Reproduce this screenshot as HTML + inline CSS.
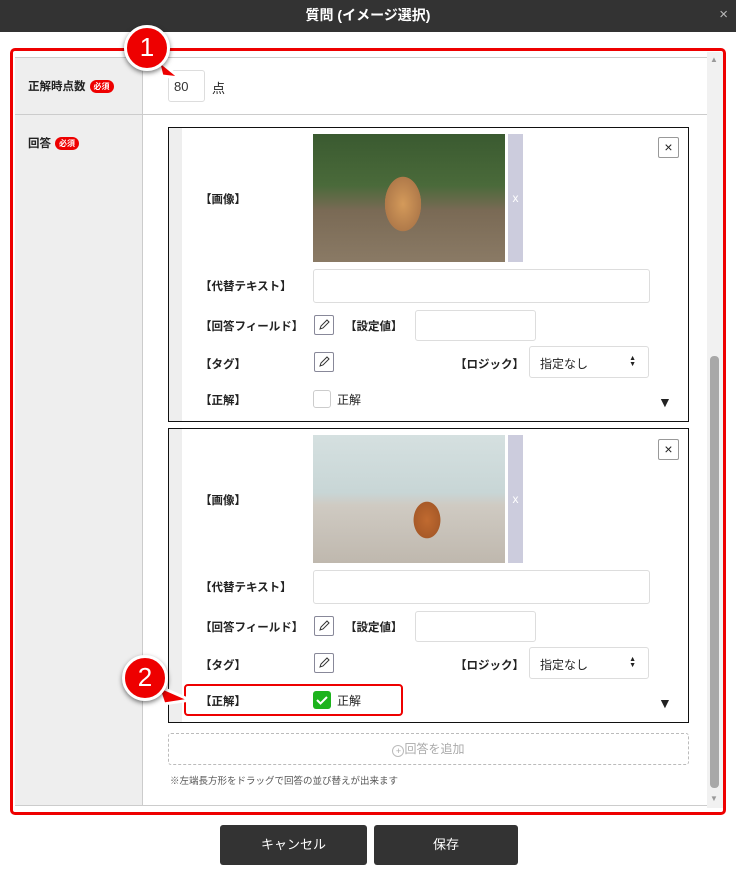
<!DOCTYPE html>
<html><head><meta charset="utf-8"><style>
*{box-sizing:border-box;margin:0;padding:0}
body{width:736px;height:879px;background:#fff;font-family:"Liberation Sans","Noto Sans CJK JP",sans-serif;font-size:12px;color:#222;position:relative;overflow:hidden}
.abs{position:absolute}
.hdr{left:0;top:0;width:736px;height:32px;background:#333;color:#fff;font-weight:bold;font-size:14px;text-align:center;line-height:30px}
.lab{font-size:11.5px;color:#222;font-weight:bold}
.badge{display:inline-block;background:#e00;color:#fff;font-size:8px;border-radius:7px;padding:1px 4px;font-weight:bold;vertical-align:1px;margin-left:4px}
.card{left:168px;width:521px;height:295px;border:1px solid #111;background:#fff}
.strip{left:0;top:0;width:13px;height:100%;background:#eee}
.inp{border:1px solid #ddd;border-radius:3px;background:#fff}
.pen{width:20px;height:20px;border:1px solid #889;border-radius:2px;background:#fff}
.circ{width:46px;height:46px;border-radius:50%;background:#e00;border:3px solid #fff;box-shadow:0 2px 5px rgba(0,0,0,.5);color:#fff;font-size:26px;text-align:center;line-height:38px}
.btn{top:825px;height:40px;background:#333;border-radius:3px;color:#fff;text-align:center;line-height:40px;font-size:13px}
</style></head><body>
<div class="abs hdr">質問 (イメージ選択)<span style="position:absolute;right:8px;top:0;font-weight:normal;color:#bbb;font-size:15px">×</span></div>

<div class="abs" style="left:15px;top:57px;width:128px;height:749px;background:#eee;border-right:1px solid #ccc"></div>
<div class="abs" style="left:15px;top:57px;width:692px;height:1px;background:#ccc"></div>
<div class="abs" style="left:15px;top:114px;width:692px;height:1px;background:#ccc"></div>
<div class="abs" style="left:15px;top:805px;width:692px;height:1px;background:#ccc"></div>
<div class="abs lab" style="left:28px;top:78px">正解時点数<span class="badge">必須</span></div>
<div class="abs lab" style="left:28px;top:135px">回答<span class="badge">必須</span></div>
<div class="abs inp" style="left:168px;top:70px;width:37px;height:32px;font-size:13px;color:#333;padding:8px 0 0 5px">80</div>
<div class="abs" style="left:212px;top:78px;font-size:13px">点</div>

<!-- scrollbar -->
<div class="abs" style="left:707px;top:52px;width:16px;height:756px;background:#f1f1f1"></div>
<div class="abs" style="left:710px;top:356px;width:9px;height:432px;background:#a8a8a8;border-radius:4px"></div>
<div class="abs" style="left:710px;top:55px;font-size:8px;color:#999">▲</div>
<div class="abs" style="left:710px;top:794px;font-size:8px;color:#999">▼</div>

<!-- card1 -->
<div class="abs card" style="top:127px">
 <div class="abs strip"></div>
 <div class="abs" style="left:144px;top:6px;width:192px;height:128px;background:radial-gradient(ellipse 30px 45px at 90px 70px,#d49a5a,#b07a4a 60%,transparent 61%),linear-gradient(180deg,#3a5a30 0%,#4a6a3a 40%,#7a6a55 60%,#8a7a65 100%)"></div>
 <div class="abs" style="left:339px;top:6px;width:15px;height:128px;background:#ccd;color:#fff;text-align:center;line-height:128px">x</div>
 <div class="abs" style="left:489px;top:9px;width:21px;height:21px;border:1px solid #999;border-radius:2px;text-align:center;line-height:18px;font-size:14px">×</div>
 <div class="abs lab" style="left:31px;top:63px">【画像】</div>
 <div class="abs lab" style="left:31px;top:150px">【代替テキスト】</div>
 <div class="abs inp" style="left:144px;top:141px;width:337px;height:34px"></div>
 <div class="abs lab" style="left:31px;top:190px">【回答フィールド】</div>
 <div class="abs pen" style="left:145px;top:187px"><svg width="18" height="18"><path d="M5 13l1-3 6-6 2 2-6 6z" fill="none" stroke="#333"/></svg></div>
 <div class="abs lab" style="left:176px;top:190px">【設定値】</div>
 <div class="abs inp" style="left:246px;top:182px;width:121px;height:31px"></div>
 <div class="abs lab" style="left:31px;top:228px">【タグ】</div>
 <div class="abs pen" style="left:145px;top:224px"><svg width="18" height="18"><path d="M5 13l1-3 6-6 2 2-6 6z" fill="none" stroke="#333"/></svg></div>
 <div class="abs lab" style="left:286px;top:228px">【ロジック】</div>
 <div class="abs inp" style="left:360px;top:218px;width:120px;height:32px;padding:8px 0 0 10px;font-size:12px">指定なし<span style="position:absolute;right:12px;top:9px;font-size:7px;line-height:6px">▲<br>▼</span></div>
 <div class="abs lab" style="left:31px;top:264px">【正解】</div>
 <div class="abs" style="left:144px;top:262px;width:18px;height:18px;border:1px solid #ccc;border-radius:3px"></div>
 <div class="abs" style="left:168px;top:263px;font-size:12px">正解</div>
 <div class="abs" style="left:489px;top:266px;font-size:14px">▼</div>
</div>

<!-- card2 -->
<div class="abs card" style="top:428px">
 <div class="abs strip"></div>
 <div class="abs" style="left:144px;top:6px;width:192px;height:128px;background:radial-gradient(ellipse 22px 30px at 114px 85px,#c06a30,#a85a28 60%,transparent 62%),linear-gradient(180deg,#d5e0e0 0%,#c8d6d6 45%,#cfcac2 55%,#bfb8ae 100%)"></div>
 <div class="abs" style="left:339px;top:6px;width:15px;height:128px;background:#ccd;color:#fff;text-align:center;line-height:128px">x</div>
 <div class="abs" style="left:489px;top:10px;width:21px;height:21px;border:1px solid #999;border-radius:2px;text-align:center;line-height:18px;font-size:14px">×</div>
 <div class="abs lab" style="left:31px;top:63px">【画像】</div>
 <div class="abs lab" style="left:31px;top:150px">【代替テキスト】</div>
 <div class="abs inp" style="left:144px;top:141px;width:337px;height:34px"></div>
 <div class="abs lab" style="left:31px;top:190px">【回答フィールド】</div>
 <div class="abs pen" style="left:145px;top:187px"><svg width="18" height="18"><path d="M5 13l1-3 6-6 2 2-6 6z" fill="none" stroke="#333"/></svg></div>
 <div class="abs lab" style="left:176px;top:190px">【設定値】</div>
 <div class="abs inp" style="left:246px;top:182px;width:121px;height:31px"></div>
 <div class="abs lab" style="left:31px;top:228px">【タグ】</div>
 <div class="abs pen" style="left:145px;top:224px"><svg width="18" height="18"><path d="M5 13l1-3 6-6 2 2-6 6z" fill="none" stroke="#333"/></svg></div>
 <div class="abs lab" style="left:286px;top:228px">【ロジック】</div>
 <div class="abs inp" style="left:360px;top:218px;width:120px;height:32px;padding:8px 0 0 10px;font-size:12px">指定なし<span style="position:absolute;right:12px;top:9px;font-size:7px;line-height:6px">▲<br>▼</span></div>
 <div class="abs lab" style="left:31px;top:264px">【正解】</div>
 <div class="abs" style="left:144px;top:262px;width:18px;height:18px;background:#1db31d;border-radius:3px"><svg width="18" height="18"><path d="M4 9l3.5 3.5L14 6" fill="none" stroke="#fff" stroke-width="2"/></svg></div>
 <div class="abs" style="left:168px;top:263px;font-size:12px">正解</div>
 <div class="abs" style="left:489px;top:266px;font-size:14px">▼</div>
</div>

<div class="abs" style="left:184px;top:684px;width:219px;height:32px;border:2.5px solid #e00;border-radius:4px"></div>

<div class="abs" style="left:168px;top:733px;width:521px;height:32px;border:1px dashed #bbb;border-radius:3px;color:#aaa;text-align:center;line-height:30px;font-size:12px"><span style="display:inline-block;width:12px;height:12px;border:1px solid #bbb;border-radius:50%;font-size:9px;line-height:10px;vertical-align:-1px">+</span>回答を追加</div>
<div class="abs" style="left:170px;top:773px;font-size:9.5px;color:#555">※左端長方形をドラッグで回答の並び替えが出来ます</div>

<div class="abs" style="left:10px;top:48px;width:716px;height:767px;border:3px solid #e00;border-radius:5px"></div>

<div class="abs btn" style="left:220px;width:147px">キャンセル</div>
<div class="abs btn" style="left:374px;width:144px">保存</div>

<svg class="abs" style="left:118px;top:20px" width="70" height="80"><path d="M40 40 L62 58 L44 56 Z" fill="#e00" stroke="#fff" stroke-width="3"/></svg>
<div class="abs circ" style="left:124px;top:25px">1</div>
<svg class="abs" style="left:118px;top:650px" width="80" height="60"><path d="M40 36 L72 50 L46 54 Z" fill="#e00" stroke="#fff" stroke-width="3"/></svg>
<div class="abs circ" style="left:122px;top:655px">2</div>
</body></html>
